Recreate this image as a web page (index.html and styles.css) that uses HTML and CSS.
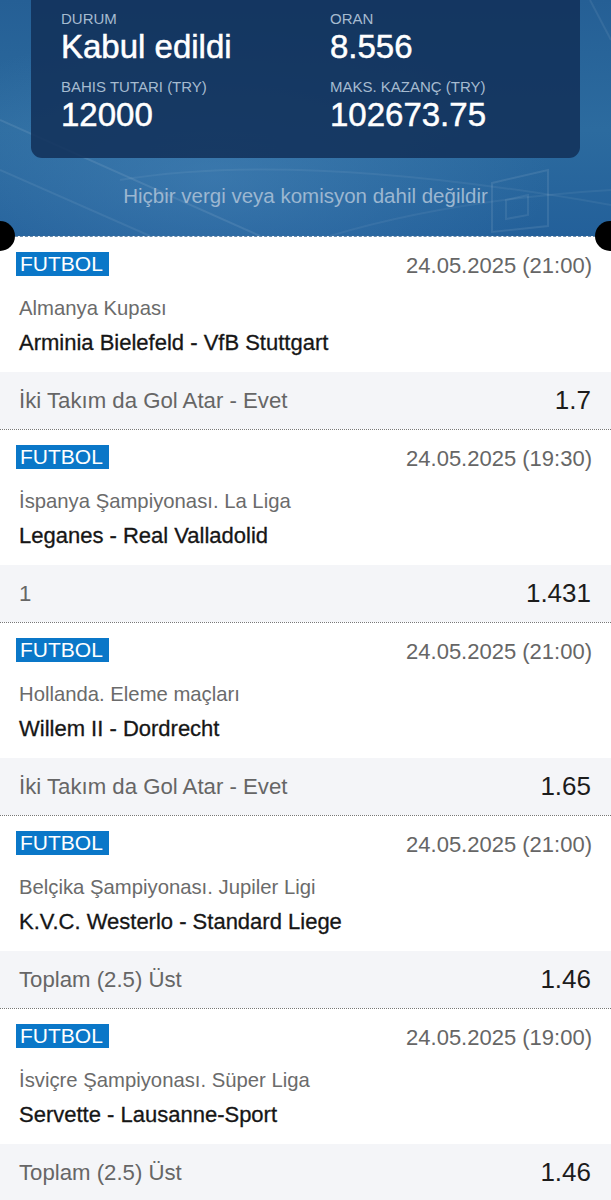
FILE: index.html
```html
<!DOCTYPE html>
<html lang="tr">
<head>
<meta charset="UTF-8">
<meta name="viewport" content="width=device-width, initial-scale=1.0">
<title>Kupon</title>
<link rel="stylesheet" href="styles.css">
</head>
<body>
    <div class="ticket-head">
        <svg class="head-bg" width="611" height="236" viewBox="0 0 611 236">
            <path d="M0 120 L260 236" stroke="rgba(255,255,255,0.09)" stroke-width="2" fill="none"/>
            <path d="M0 170 L150 236" stroke="rgba(255,255,255,0.07)" stroke-width="2" fill="none"/>
            <path d="M120 180 Q300 150 611 205" stroke="rgba(255,255,255,0.06)" stroke-width="2" fill="none"/>
            <path d="M330 236 Q450 200 611 190" stroke="rgba(255,255,255,0.06)" stroke-width="2" fill="none"/>
            <path d="M492 183 L548 170 L548 226 L492 232 Z" stroke="rgba(255,255,255,0.09)" stroke-width="2" fill="none"/>
            <path d="M506 200 L528 195 L528 215 L506 219 Z" stroke="rgba(255,255,255,0.08)" stroke-width="2" fill="none"/>
            <path d="M590 0 L611 40" stroke="rgba(255,255,255,0.07)" stroke-width="2" fill="none"/>
        </svg>

        <div class="summary">
            <div class="cell">
                <div class="label">DURUM</div>
                <div class="value">Kabul edildi</div>
            </div>
            <div class="cell">
                <div class="label">ORAN</div>
                <div class="value">8.556</div>
            </div>
            <div class="cell">
                <div class="label">BAHIS TUTARI (TRY)</div>
                <div class="value">12000</div>
            </div>
            <div class="cell">
                <div class="label">MAKS. KAZANÇ (TRY)</div>
                <div class="value">102673.75</div>
            </div>
        </div>

        <p class="note">Hiçbir vergi veya komisyon dahil değildir</p>

        <span class="hole hole-left"></span>
        <span class="hole hole-right"></span>
    </div>

    <div class="bets">
        <div class="bet">
            <div class="bet-info">
                <div class="bet-top">
                    <span class="sport">FUTBOL</span>
                    <span class="date">24.05.2025 (21:00)</span>
                </div>
                <div class="league">Almanya Kupası</div>
                <div class="teams">Arminia Bielefeld - VfB Stuttgart</div>
            </div>
            <div class="pick">
                <span class="market">İki Takım da Gol Atar - Evet</span>
                <span class="odd">1.7</span>
            </div>
        </div>

        <div class="bet">
            <div class="bet-info">
                <div class="bet-top">
                    <span class="sport">FUTBOL</span>
                    <span class="date">24.05.2025 (19:30)</span>
                </div>
                <div class="league">İspanya Şampiyonası. La Liga</div>
                <div class="teams">Leganes - Real Valladolid</div>
            </div>
            <div class="pick">
                <span class="market">1</span>
                <span class="odd">1.431</span>
            </div>
        </div>

        <div class="bet">
            <div class="bet-info">
                <div class="bet-top">
                    <span class="sport">FUTBOL</span>
                    <span class="date">24.05.2025 (21:00)</span>
                </div>
                <div class="league">Hollanda. Eleme maçları</div>
                <div class="teams">Willem II - Dordrecht</div>
            </div>
            <div class="pick">
                <span class="market">İki Takım da Gol Atar - Evet</span>
                <span class="odd">1.65</span>
            </div>
        </div>

        <div class="bet">
            <div class="bet-info">
                <div class="bet-top">
                    <span class="sport">FUTBOL</span>
                    <span class="date">24.05.2025 (21:00)</span>
                </div>
                <div class="league">Belçika Şampiyonası. Jupiler Ligi</div>
                <div class="teams">K.V.C. Westerlo - Standard Liege</div>
            </div>
            <div class="pick">
                <span class="market">Toplam (2.5) Üst</span>
                <span class="odd">1.46</span>
            </div>
        </div>

        <div class="bet">
            <div class="bet-info">
                <div class="bet-top">
                    <span class="sport">FUTBOL</span>
                    <span class="date">24.05.2025 (19:00)</span>
                </div>
                <div class="league">İsviçre Şampiyonası. Süper Liga</div>
                <div class="teams">Servette - Lausanne-Sport</div>
            </div>
            <div class="pick">
                <span class="market">Toplam (2.5) Üst</span>
                <span class="odd">1.46</span>
            </div>
        </div>
    </div>
</body>
</html>
```

FILE: styles.css
```css
body {
    margin: 0;
    font-family: "Liberation Sans", Arial, sans-serif;
    background-color: #fff;
}

/* header with stadium background */
.ticket-head {
    position: relative;
    z-index: 1;
    height: 236px;
    background:
        radial-gradient(ellipse at 35% 75%, rgba(90, 150, 200, 0.35), rgba(90, 150, 200, 0) 60%),
        linear-gradient(180deg, #255f95 0%, #2c6b9f 55%, #23609a 100%);
}
.head-bg {
    position: absolute;
    top: 0;
    left: 0;
}
.summary {
    position: relative;
    margin: 0 31px;
    padding: 10px 30px 25px;
    display: grid;
    grid-template-columns: 269px 1fr;
    row-gap: 13px;
    background-color: rgba(18, 48, 88, 0.86);
    border-radius: 0 0 11px 11px;
}
.label {
    font-size: 15px;
    line-height: 17px;
    color: #a6bbd0;
}
.value {
    margin-top: 2px;
    font-size: 33px;
    line-height: 36px;
    color: #fff;
    -webkit-text-stroke: 0.5px #fff;
}
.note {
    position: relative;
    margin: 26px 0 0;
    text-align: center;
    font-size: 20.5px;
    line-height: 23px;
    color: #9cb7d1;
}
.hole {
    position: absolute;
    bottom: -15px;
    width: 30px;
    height: 30px;
    border-radius: 50%;
    background-color: #000;
}
.hole-left {
    left: -15px;
}
.hole-right {
    right: -14px;
}

/* bet list */
.bets {
    border-top: 1px dashed #6b8cab;
}
.bet {
    border-bottom: 1px dotted #777;
}
.bet-info {
    padding: 15px 19px 16px 16px;
}
.bet-top {
    display: flex;
    justify-content: space-between;
    align-items: center;
    height: 24px;
}
.sport {
    background-color: #0a77c8;
    color: #fff;
    font-size: 21px;
    line-height: 24px;
    padding: 0 6px 0 4px;
}
.date {
    font-size: 22px;
    line-height: 24px;
    margin-top: 3px;
    color: #666;
}
.league {
    margin-top: 20px;
    padding-left: 3px;
    font-size: 20.3px;
    line-height: 24px;
    color: #6b6b6b;
}
.teams {
    margin-top: 10px;
    padding-left: 3px;
    font-size: 22px;
    line-height: 26px;
    color: #161616;
    -webkit-text-stroke: 0.3px #161616;
}
.pick {
    display: flex;
    justify-content: space-between;
    align-items: center;
    height: 57px;
    padding: 0 20px 0 19px;
    background-color: #f4f5f8;
}
.market {
    font-size: 22.2px;
    color: #666;
}
.odd {
    font-size: 26px;
    color: #1c1c1c;
}
```
